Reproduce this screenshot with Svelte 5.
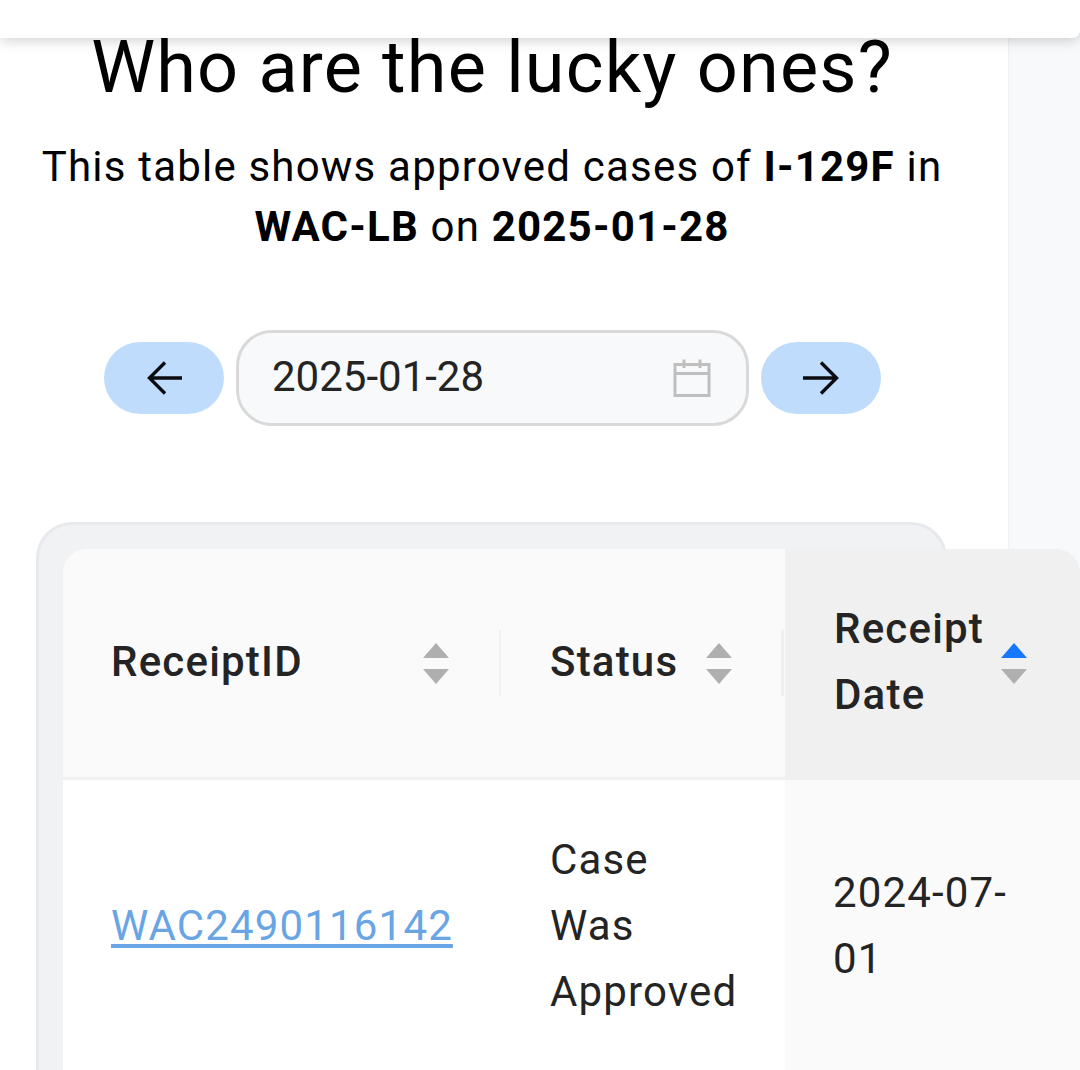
<script>
  let date = '2025-01-28';
</script>

<div class="page">
  <header class="topbar"></header>

  <main class="content">
    <h1>Who are the lucky ones?</h1>
    <p class="lead">
      This table shows approved cases of <strong>I-129F</strong> in<br />
      <strong>WAC-LB</strong> on <strong>{date}</strong>
    </p>

    <div class="picker">
      <button class="nav" aria-label="Previous day">
        <svg width="42" height="42" viewBox="0 0 42 42" fill="none" stroke="#0b0b12" stroke-width="3.4">
          <path d="M39 21H7M22 5.500L6.500 21 22 36.500" />
        </svg>
      </button>
      <div class="date">
        <span>{date}</span>
        <svg width="42" height="42" viewBox="0 0 42 42" fill="none" stroke="#bfbfbf" stroke-width="3">
          <path d="M4 7.500H38V38.500H4ZM4 16.500H38M13 2.500V11M29 2.500V11" />
        </svg>
      </div>
      <button class="nav" aria-label="Next day">
        <svg width="42" height="42" viewBox="0 0 42 42" fill="none" stroke="#0b0b12" stroke-width="3.4">
          <path d="M3 21H36M21 5.500L36.500 21 21 36.500" />
        </svg>
      </button>
    </div>

    <div class="table-wrap">
      <table>
        <colgroup>
          <col class="c1" />
          <col class="c2" />
          <col class="c3" />
        </colgroup>
        <thead>
          <tr>
            <th class="first">
              <div class="head sep">
                <span class="label">ReceiptID</span>
                <span class="sorter"><i class="up"></i><i class="down"></i></span>
              </div>
            </th>
            <th class="second">
              <div class="head sep">
                <span class="label">Status</span>
                <span class="sorter"><i class="up"></i><i class="down"></i></span>
              </div>
            </th>
            <th class="sorted">
              <div class="head">
                <span class="label">Receipt Date</span>
                <span class="sorter"><i class="up on"></i><i class="down"></i></span>
              </div>
            </th>
          </tr>
        </thead>
        <tbody>
          <tr>
            <td class="first"><a href="#case">WAC2490116142</a></td>
            <td class="second">Case Was Approved</td>
            <td class="sorted-cell">2024-07-01</td>
          </tr>
        </tbody>
      </table>
    </div>
  </main>
</div>

<style>
  :global(body) {
    margin: 0;
    background: #f8f9fb;
    overflow: hidden;
  }

  .page {
    height: 1070px;
    overflow: hidden;
    font-family: Roboto, "Liberation Sans", sans-serif;
    color: #1f1f1f;
  }

  .topbar {
    position: relative;
    z-index: 2;
    height: 38px;
    background: #fff;
    border-radius: 0 0 8px 0;
    box-shadow: 0 2px 14px rgba(0, 0, 0, 0.2);
  }

  .content {
    display: flow-root;
    width: 1009px;
    height: 1032px;
    background: #fff;
    box-sizing: border-box;
    padding-left: 36px;
    border-right: 1px solid #eff0f3;
  }

  h1 {
    margin: -12px 0 0 -36px;
    font-size: 72px;
    line-height: 84px;
    font-weight: 400;
    letter-spacing: 1.2px;
    color: #000;
    text-align: center;
    width: 984px;
  }

  .lead {
    margin: 27px 0 0 -36px;
    width: 984px;
    font-size: 42px;
    line-height: 60px;
    letter-spacing: 1.2px;
    color: #000;
    text-align: center;
  }

  .picker {
    display: flex;
    align-items: center;
    gap: 12px;
    margin: 73px 0 0 68px;
  }

  .nav {
    width: 120px;
    height: 72px;
    padding: 0;
    border: 0;
    border-radius: 36px;
    background: #bfdcfd;
    display: flex;
    align-items: center;
    justify-content: center;
  }

  .date {
    width: 513px;
    height: 96px;
    box-sizing: border-box;
    padding: 0 33px;
    border: 3px solid #d9d9d9;
    border-radius: 36px;
    background: #f8f9fb;
    display: flex;
    align-items: center;
    justify-content: space-between;
    font-size: 42px;
    color: #242424;
  }

  .date span {
    margin-top: -3px;
  }

  .table-wrap {
    width: 911px;
    margin-top: 96px;
    box-sizing: border-box;
    height: 600px;
    padding: 24px 0 0 24px;
    background: #f1f2f4;
    border: 3px solid #e8e9ec;
    border-bottom: 0;
    border-radius: 36px 36px 0 0;
  }

  table {
    width: 1017px;
    table-layout: fixed;
    border-collapse: separate;
    border-spacing: 0;
  }

  .c1 { width: 437px; }
  .c2 { width: 285px; }
  .c3 { width: 295px; }

  th {
    height: 231px;
    padding: 0 0 0 48px;
    background: #fafafa;
    border-bottom: 3px solid #f0f0f0;
    text-align: left;
    font-weight: 500;
    box-sizing: border-box;
  }

  th.first {
    border-top-left-radius: 24px;
  }

  th.second,
  td.second {
    padding-left: 50px;
  }

  th.sorted {
    padding-left: 49px;
    background: #f0f0f0;
    border-top-right-radius: 24px;
  }

  .head {
    position: relative;
    display: flex;
    align-items: center;
    justify-content: space-between;
    padding-right: 51px;
    line-height: 66px;
    letter-spacing: 1.2px;
    font-size: 42px;
    color: #242424;
  }

  .label {
    margin-top: -3px;
  }

  .second .head,
  .sorted .head {
    padding-right: 53px;
  }

  .sep::after {
    content: "";
    position: absolute;
    right: -1px;
    top: 50%;
    height: 66px;
    margin-top: -33px;
    width: 2px;
    background: #f0f0f0;
  }

  .second .sep::after {
    right: 1px;
    width: 3px;
  }

  .sorter {
    display: flex;
    flex-direction: column;
    gap: 11px;
    flex: none;
  }

  .sorter i {
    display: block;
    width: 0;
    height: 0;
    border-left: 13.500px solid transparent;
    border-right: 13.500px solid transparent;
  }

  .up { border-bottom: 15px solid #afafaf; }
  .down { border-top: 15px solid #afafaf; }
  .up.on { border-bottom-color: #1677ff; }

  td {
    padding: 47px 49px 48px 48px;
    font-size: 42px;
    line-height: 66px;
    letter-spacing: 1.15px;
    color: #242424;
    box-sizing: border-box;
    background: #fff;
  }

  td.sorted-cell {
    background: #fafafa;
  }

  a {
    color: #69a5e4;
    text-decoration: underline;
    text-underline-offset: 4px;
  }
</style>
